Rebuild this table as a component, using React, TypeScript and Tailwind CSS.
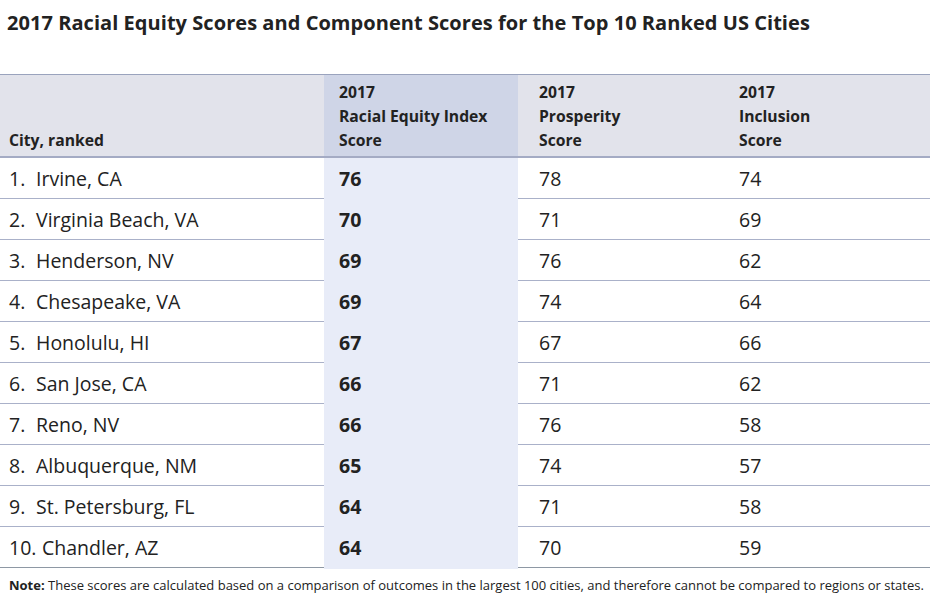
const rows: [string, string, number, number, number][] = [
  ["1.", "Irvine, CA", 76, 78, 74],
  ["2.", "Virginia Beach, VA", 70, 71, 69],
  ["3.", "Henderson, NV", 69, 76, 62],
  ["4.", "Chesapeake, VA", 69, 74, 64],
  ["5.", "Honolulu, HI", 67, 67, 66],
  ["6.", "San Jose, CA", 66, 71, 62],
  ["7.", "Reno, NV", 66, 76, 58],
  ["8.", "Albuquerque, NM", 65, 74, 57],
  ["9.", "St. Petersburg, FL", 64, 71, 58],
  ["10.", "Chandler, AZ", 64, 70, 59],
];

const cols = "grid grid-cols-[324px_194px_200px_212px]";

export default function App() {
  return (
    <div
      className="w-[930px] h-[598px] bg-white text-[#222] overflow-hidden"
      style={{ fontFamily: '"Open Sans", "Noto Sans", sans-serif' }}
    >
      <h1 className="h-[74px] pt-[8px] pl-[7px] text-[20px] font-bold tracking-[0.05px] text-[#222]">
        2017 Racial Equity Scores and Component Scores for the Top 10 Ranked US Cities
      </h1>

      <div className={`${cols} h-[84px] border-t border-[#9aa3bd] border-b-2 border-b-[#a4abc4] text-[15.7px] font-bold leading-[24px]`}>
        <div className="bg-[#e2e3eb] pl-[9px] flex items-end pb-[4px]">City, ranked</div>
        <div className="bg-[#cfd5e7] pl-[15px] flex flex-col justify-end pb-[4px]">
          <span>2017</span>
          <span>Racial Equity Index</span>
          <span>Score</span>
        </div>
        <div className="bg-[#e2e3eb] pl-[21px] flex flex-col justify-end pb-[4px]">
          <span>2017</span>
          <span>Prosperity</span>
          <span>Score</span>
        </div>
        <div className="bg-[#e2e3eb] pl-[21px] flex flex-col justify-end pb-[4px]">
          <span>2017</span>
          <span>Inclusion</span>
          <span>Score</span>
        </div>
      </div>

      {rows.map(([rank, city, rei, pros, inc], i) => (
        <div
          key={city}
          className={`${cols} h-[41px] border-b ${i === rows.length - 1 ? "border-[#8e98a4]" : "border-[#aab1c9]"} text-[19.5px] leading-[42px]`}
        >
          <div className="pl-[9px] flex">
            <span className={rank.length > 2 ? "w-[33px]" : "w-[27px]"}>{rank}</span>
            <span>{city}</span>
          </div>
          <div className="bg-[#e8ecf8] pl-[15px] font-bold">{rei}</div>
          <div className="pl-[21px]">{pros}</div>
          <div className="pl-[21px]">{inc}</div>
        </div>
      ))}

      <p className="pl-[9px] pt-[8px] text-[13px] leading-[18px] text-[#222]">
        <b>Note:</b> These scores are calculated based on a comparison of outcomes in the largest 100 cities, and therefore cannot be compared to regions or states.
      </p>
    </div>
  );
}
